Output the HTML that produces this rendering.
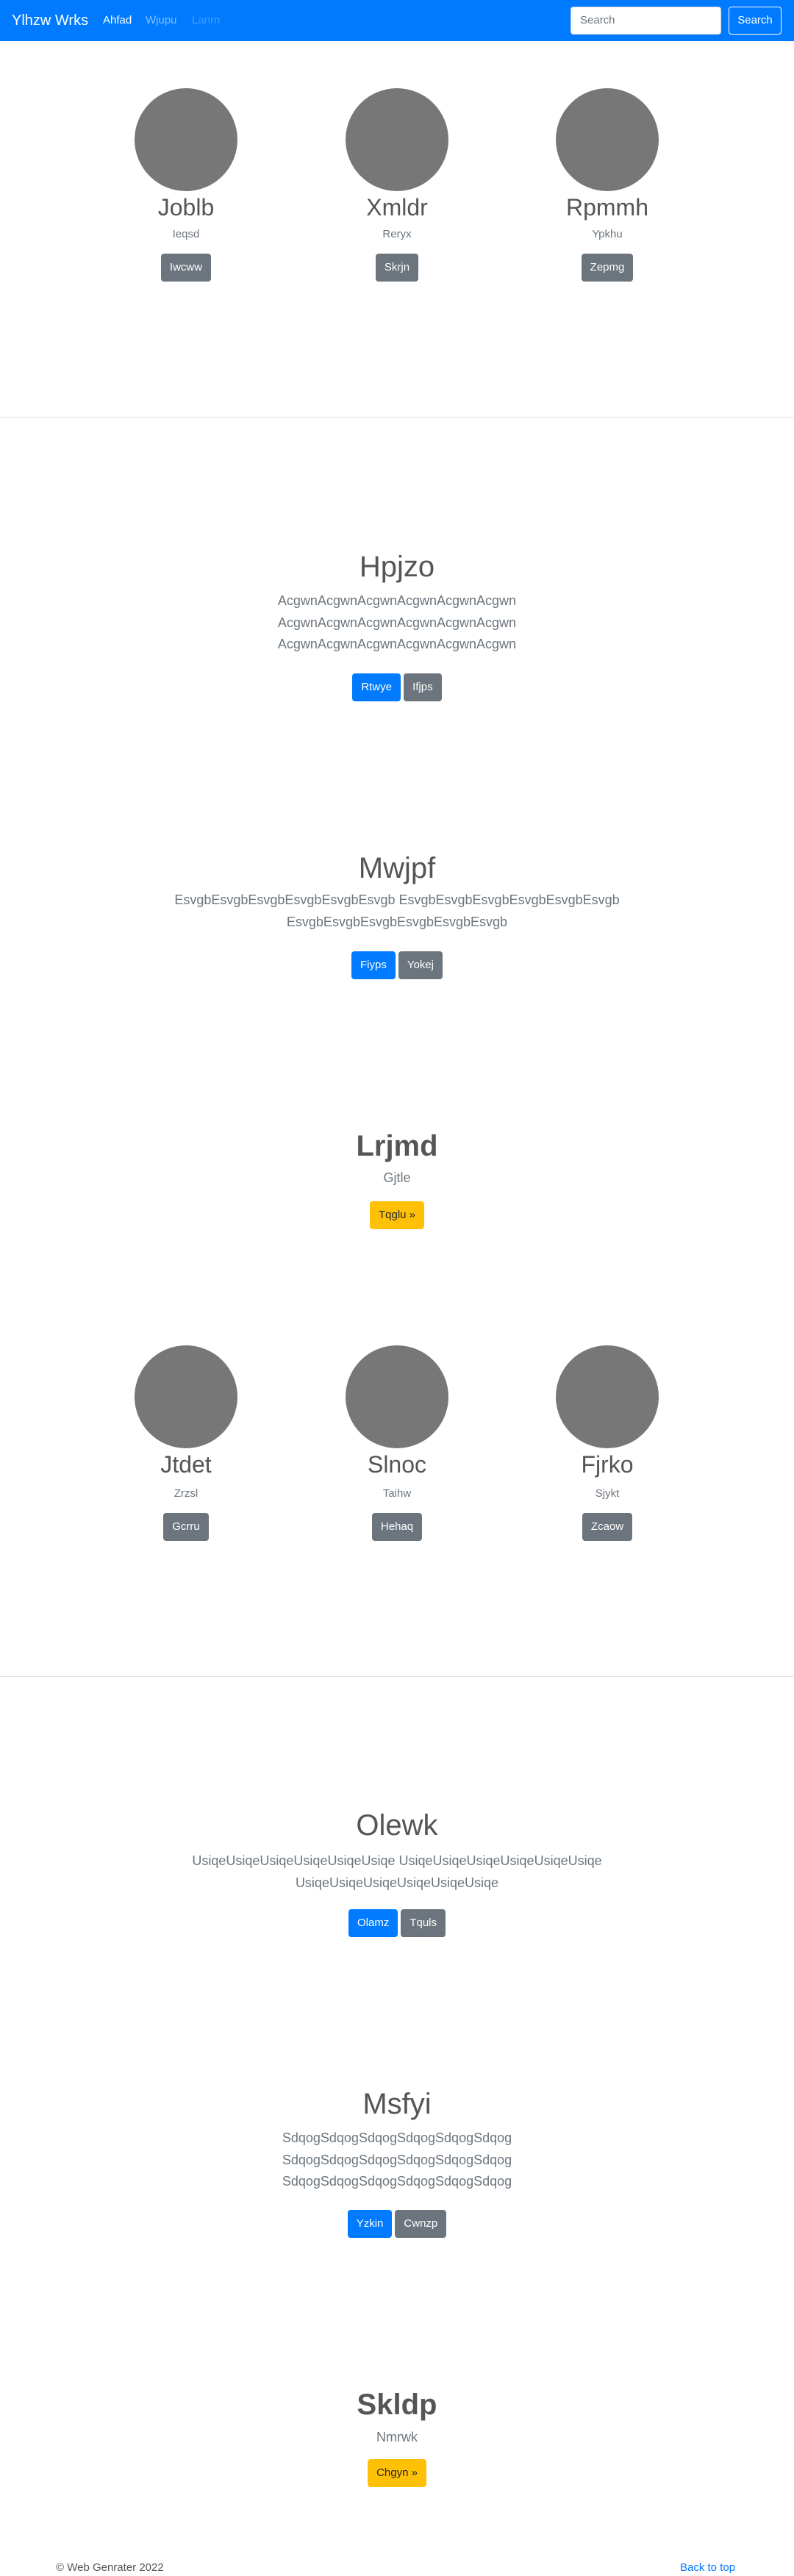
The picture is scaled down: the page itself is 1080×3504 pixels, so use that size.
<!DOCTYPE html>
<html><head><meta charset="utf-8">
<style>
*{box-sizing:border-box;margin:0;padding:0}
body{width:1080px;height:3503px;position:relative;background:#fff;font-family:"Liberation Sans",sans-serif;color:#555;overflow:hidden}
.nav{position:absolute;left:0;top:0;width:1080px;height:56px;background:#007bff}
.nav span{position:absolute;top:0;line-height:56px;white-space:nowrap}
.ab{position:absolute;left:0;width:1080px;text-align:center;white-space:nowrap}
.circ{position:absolute;width:140px;height:140px;border-radius:50%;background:#777}
.btn{display:inline-block;height:38px;line-height:38px;padding:0 12px;border-radius:4px;color:#fff;font-size:15px;margin:0 2px;vertical-align:top}
.p{background:#007bff}.s{background:#6c757d}.w{background:#ffc107;color:#212529}
.t{font-size:40px;font-weight:300;line-height:48px;color:#555}
.l{font-size:18px;font-weight:300;line-height:29.5px;color:#6c757d}
.nm{font-size:32px;line-height:40px;color:#555}
.sb{font-size:15px;line-height:22px;color:#6c757d}
.bt{font-size:40px;font-weight:bold;line-height:48px;color:#555}
.hr{position:absolute;left:0;width:1080px;height:1px;background:#e5e5e5}
</style></head><body>
<div class="nav">
<span style="left:16px;font-size:20px;color:#fff">Ylhzw Wrks</span>
<span style="left:140px;font-size:15px;color:#fff">Ahfad</span>
<span style="left:198px;font-size:15px;color:rgba(255,255,255,.5)">Wjupu</span>
<span style="left:261px;font-size:15px;color:rgba(255,255,255,.25)">Lanrn</span>
<div style="position:absolute;left:776px;top:9px;width:205px;height:38px;background:#fff;border-radius:4px;border:1px solid #ced4da;font-size:15px;line-height:36px;padding-left:12px;color:#6c757d">Search</div>
<div style="position:absolute;left:991px;top:9px;width:72px;height:38px;border:1px solid #fff;border-radius:4px;color:#fff;font-size:15px;line-height:36px;text-align:center">Search</div>
</div>

<div class="circ" style="left:183px;top:120px"></div>
<div class="circ" style="left:470px;top:120px"></div>
<div class="circ" style="left:756px;top:120px"></div>
<div class="ab nm" style="left:-287px;top:262px">Joblb</div>
<div class="ab nm" style="top:262px">Xmldr</div>
<div class="ab nm" style="left:286px;top:262px">Rpmmh</div>
<div class="ab sb" style="left:-287px;top:308px">Ieqsd</div>
<div class="ab sb" style="top:308px">Reryx</div>
<div class="ab sb" style="left:286px;top:308px">Ypkhu</div>
<div class="ab" style="left:-287px;top:345px"><span class="btn s">Iwcww</span></div>
<div class="ab" style="top:345px"><span class="btn s">Skrjn</span></div>
<div class="ab" style="left:286px;top:345px"><span class="btn s">Zepmg</span></div>
<div class="hr" style="top:567px"></div>

<div class="ab t" style="top:747px">Hpjzo</div>
<div class="ab l" style="top:803px">AcgwnAcgwnAcgwnAcgwnAcgwnAcgwn<br>AcgwnAcgwnAcgwnAcgwnAcgwnAcgwn<br>AcgwnAcgwnAcgwnAcgwnAcgwnAcgwn</div>
<div class="ab" style="top:916px"><span class="btn p">Rtwye</span><span class="btn s">Ifjps</span></div>

<div class="ab t" style="top:1157px">Mwjpf</div>
<div class="ab l" style="top:1210px">EsvgbEsvgbEsvgbEsvgbEsvgbEsvgb EsvgbEsvgbEsvgbEsvgbEsvgbEsvgb<br>EsvgbEsvgbEsvgbEsvgbEsvgbEsvgb</div>
<div class="ab" style="top:1294px"><span class="btn p">Fiyps</span><span class="btn s">Yokej</span></div>

<div class="ab bt" style="top:1535px">Lrjmd</div>
<div class="ab l" style="top:1588px">Gjtle</div>
<div class="ab" style="top:1634px"><span class="btn w">Tqglu »</span></div>

<div class="circ" style="left:183px;top:1830px"></div>
<div class="circ" style="left:470px;top:1830px"></div>
<div class="circ" style="left:756px;top:1830px"></div>
<div class="ab nm" style="left:-287px;top:1972px">Jtdet</div>
<div class="ab nm" style="top:1972px">Slnoc</div>
<div class="ab nm" style="left:286px;top:1972px">Fjrko</div>
<div class="ab sb" style="left:-287px;top:2021px">Zrzsl</div>
<div class="ab sb" style="top:2021px">Taihw</div>
<div class="ab sb" style="left:286px;top:2021px">Sjykt</div>
<div class="ab" style="left:-287px;top:2058px"><span class="btn s">Gcrru</span></div>
<div class="ab" style="top:2058px"><span class="btn s">Hehaq</span></div>
<div class="ab" style="left:286px;top:2058px"><span class="btn s">Zcaow</span></div>
<div class="hr" style="top:2280px"></div>

<div class="ab t" style="top:2459px">Olewk</div>
<div class="ab l" style="top:2517px">UsiqeUsiqeUsiqeUsiqeUsiqeUsiqe UsiqeUsiqeUsiqeUsiqeUsiqeUsiqe<br>UsiqeUsiqeUsiqeUsiqeUsiqeUsiqe</div>
<div class="ab" style="top:2597px"><span class="btn p">Olamz</span><span class="btn s">Tquls</span></div>

<div class="ab t" style="top:2838px">Msfyi</div>
<div class="ab l" style="top:2894px">SdqogSdqogSdqogSdqogSdqogSdqog<br>SdqogSdqogSdqogSdqogSdqogSdqog<br>SdqogSdqogSdqogSdqogSdqogSdqog</div>
<div class="ab" style="top:3006px"><span class="btn p">Yzkin</span><span class="btn s">Cwnzp</span></div>

<div class="ab bt" style="top:3247px">Skldp</div>
<div class="ab l" style="top:3301px">Nmrwk</div>
<div class="ab" style="top:3345px"><span class="btn w">Chgyn »</span></div>

<div style="position:absolute;left:76px;top:3482px;font-size:15px;line-height:22px;color:#555">© Web Genrater 2022</div>
<div style="position:absolute;left:925px;top:3482px;font-size:15px;line-height:22px;color:#007bff">Back to top</div>
</body></html>
